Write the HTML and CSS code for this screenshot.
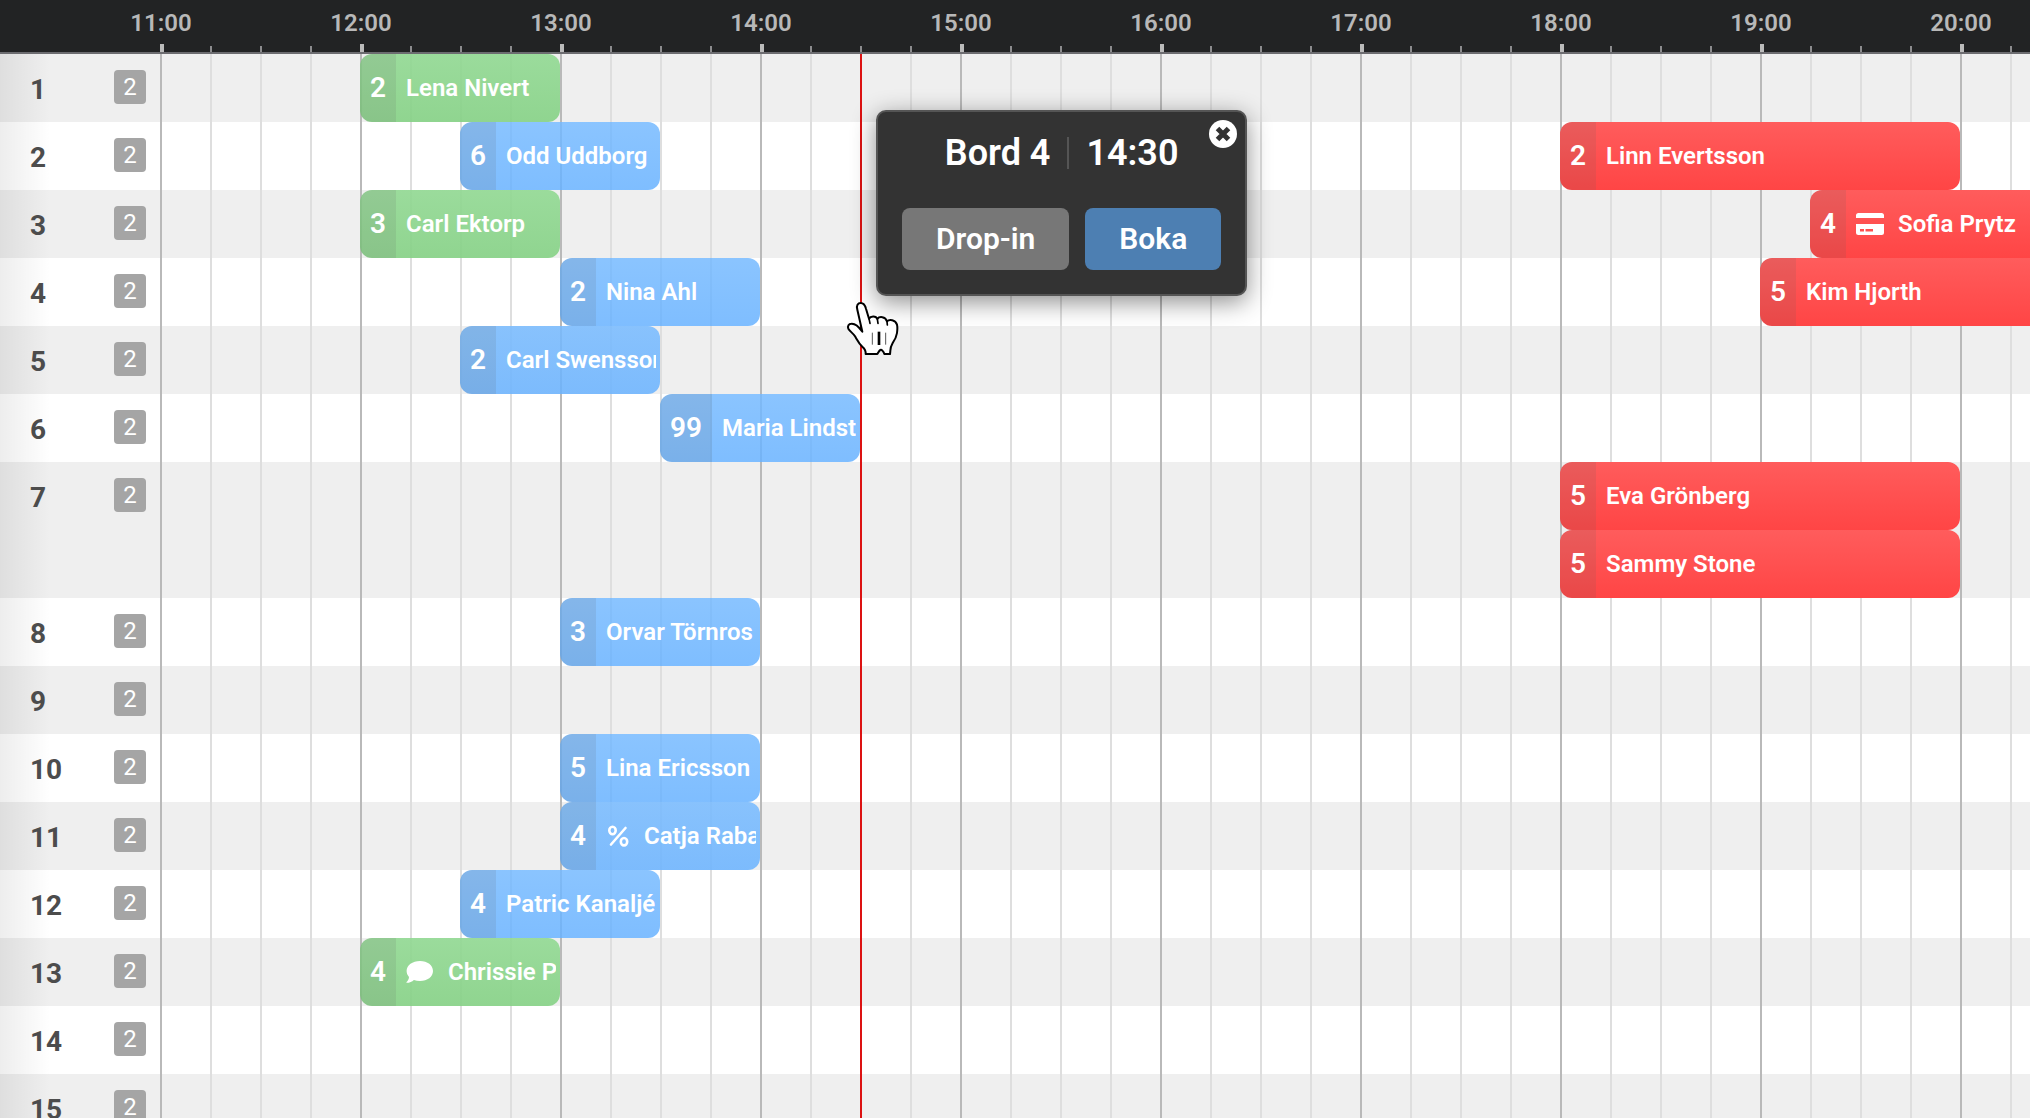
FILE: index.html
```
<!DOCTYPE html>
<html lang="sv">
<head>
    <meta charset="UTF-8">
    <meta name="viewport" content="width=device-width, initial-scale=1.0">
    <title>Bokningar</title>
    <link rel="stylesheet" href="styles.css">
</head>
<body>
    <!-- Time axis -->
    <header class="timebar">
        <div class="axis">
            <ul class="times">
                <li>11:00</li>
                <li>12:00</li>
                <li>13:00</li>
                <li>14:00</li>
                <li>15:00</li>
                <li>16:00</li>
                <li>17:00</li>
                <li>18:00</li>
                <li>19:00</li>
                <li>20:00</li>
            </ul>
        </div>
    </header>

    <!-- Tables and bookings -->
    <main class="board">
        <div class="row">
            <div class="label"><span class="number">1</span><span class="seats">2</span></div>
            <div class="track">
                <div class="booking seated from-1200 hour-1"><span class="guests">2</span><span class="name">Lena Nivert</span></div>
            </div>
        </div>
        <div class="row">
            <div class="label"><span class="number">2</span><span class="seats">2</span></div>
            <div class="track">
                <div class="booking done from-1230 hour-1"><span class="guests">6</span><span class="name">Odd Uddborg</span></div>
                <div class="booking upcoming from-1800 hour-2"><span class="guests">2</span><span class="name">Linn Evertsson</span></div>
            </div>
        </div>
        <div class="row">
            <div class="label"><span class="number">3</span><span class="seats">2</span></div>
            <div class="track">
                <div class="booking seated from-1200 hour-1"><span class="guests">3</span><span class="name">Carl Ektorp</span></div>
                <div class="booking upcoming from-1915 hour-2">
                    <span class="guests">4</span>
                    <svg class="icon card" viewBox="0 0 28 22" width="28" height="22">
                        <path fill="#fff" fill-rule="evenodd" d="M2.500 0H25.500Q28 0 28 2.500V5H0V2.500Q0 0 2.500 0ZM0 11H28V19.500Q28 22 25.500 22H2.500Q0 22 0 19.500ZM4 16V18.500H8V16ZM9.500 16V18.500H17V16Z"/>
                    </svg>
                    <span class="name">Sofia Prytz</span>
                </div>
            </div>
        </div>
        <div class="row">
            <div class="label"><span class="number">4</span><span class="seats">2</span></div>
            <div class="track">
                <div class="booking done from-1300 hour-1"><span class="guests">2</span><span class="name">Nina Ahl</span></div>
                <div class="booking upcoming from-1900 hour-2"><span class="guests">5</span><span class="name">Kim Hjorth</span></div>
            </div>
        </div>
        <div class="row">
            <div class="label"><span class="number">5</span><span class="seats">2</span></div>
            <div class="track">
                <div class="booking done from-1230 hour-1"><span class="guests">2</span><span class="name">Carl Swensson</span></div>
            </div>
        </div>
        <div class="row">
            <div class="label"><span class="number">6</span><span class="seats">2</span></div>
            <div class="track">
                <div class="booking done from-1330 hour-1"><span class="guests">99</span><span class="name">Maria Lindström</span></div>
            </div>
        </div>
        <div class="row">
            <div class="label"><span class="number">7</span><span class="seats">2</span></div>
            <div class="track">
                <div class="booking upcoming from-1800 hour-2"><span class="guests">5</span><span class="name">Eva Grönberg</span></div>
                <div class="booking upcoming from-1800 hour-2 second"><span class="guests">5</span><span class="name">Sammy Stone</span></div>
            </div>
        </div>
        <div class="row">
            <div class="label"><span class="number">8</span><span class="seats">2</span></div>
            <div class="track">
                <div class="booking done from-1300 hour-1"><span class="guests">3</span><span class="name">Orvar Törnros</span></div>
            </div>
        </div>
        <div class="row">
            <div class="label"><span class="number">9</span><span class="seats">2</span></div>
            <div class="track"></div>
        </div>
        <div class="row">
            <div class="label"><span class="number">10</span><span class="seats">2</span></div>
            <div class="track">
                <div class="booking done from-1300 hour-1"><span class="guests">5</span><span class="name">Lina Ericsson</span></div>
            </div>
        </div>
        <div class="row">
            <div class="label"><span class="number">11</span><span class="seats">2</span></div>
            <div class="track">
                <div class="booking done from-1300 hour-1">
                    <span class="guests">4</span>
                    <svg class="icon percent" viewBox="0 0 24 22" width="24" height="22">
                        <g fill="none" stroke="#fff" stroke-width="2.600" stroke-linecap="round">
                            <ellipse cx="6.500" cy="5.500" rx="3.200" ry="3.700"/>
                            <ellipse cx="18" cy="16.700" rx="3.200" ry="3.700"/>
                            <path d="M19.500 3L5 19.500"/>
                        </g>
                    </svg>
                    <span class="name">Catja Rabalder</span>
                </div>
            </div>
        </div>
        <div class="row">
            <div class="label"><span class="number">12</span><span class="seats">2</span></div>
            <div class="track">
                <div class="booking done from-1230 hour-1"><span class="guests">4</span><span class="name">Patric Kanaljé</span></div>
            </div>
        </div>
        <div class="row">
            <div class="label"><span class="number">13</span><span class="seats">2</span></div>
            <div class="track">
                <div class="booking seated from-1200 hour-1">
                    <span class="guests">4</span>
                    <svg class="icon comment" viewBox="0 0 28 22" width="28" height="22">
                        <path fill="#fff" d="M14 0C21.500 0 27 4.300 27 10S21.500 20 14 20C11.800 20 9.700 19.600 7.900 18.900C6 20.600 3.500 21.800 0.800 21.800C0.300 21.800 0.300 21.300 0.600 21C2 19.600 2.900 18 3 15.900C1.500 14.300 0.600 12.200 0.600 10C0.600 4.300 6.500 0 14 0Z"/>
                    </svg>
                    <span class="name">Chrissie Palm</span>
                </div>
            </div>
        </div>
        <div class="row">
            <div class="label"><span class="number">14</span><span class="seats">2</span></div>
            <div class="track"></div>
        </div>
        <div class="row">
            <div class="label"><span class="number">15</span><span class="seats">2</span></div>
            <div class="track"></div>
        </div>

        <!-- Selected time -->
        <div class="now"></div>

        <!-- Popup for a free slot -->
        <div class="popup">
            <button type="button" class="close" aria-label="Stäng">
                <svg viewBox="0 0 28 28" width="28" height="28">
                    <circle cx="14" cy="14" r="14" fill="#fff"/>
                    <path d="M8.500 8.500L19.500 19.500M19.500 8.500L8.500 19.500" stroke="#333" stroke-width="5"/>
                </svg>
            </button>
            <h2><span>Bord 4</span><span class="time">14:30</span></h2>
            <div class="actions">
                <button type="button" class="dropin">Drop-in</button>
                <button type="button" class="book">Boka</button>
            </div>
        </div>

        <svg class="pointer" viewBox="48 32 162 168" width="54" height="56">
            <path fill="#fff" stroke="#000" stroke-width="6" stroke-linejoin="round" d="M97 124L82 58C78 45 84 38 92 38C101 38 105 44 108 55L117 85C122 76 138 76 142 86C148 77 166 78 171 93C178 86 196 88 201 103C203 110 202 120 201 128C199 142 194 150 187 160C180 171 182 178 180 191H163C161 184 155 177 151 179C147 181 145 187 142 191H107C108 181 105 176 97 169C86 159 82 150 75 138C69 128 60 124 55 115C52 107 56 100 64 100C76 99 84 108 97 124Z"/>
            <path fill="none" stroke="#000" stroke-width="5" stroke-linecap="round" d="M117 85L120 99M142 86L144 99M171 93L172 104"/>
            <path fill="none" stroke="#000" stroke-width="8" d="M147 124V164"/>
            <path fill="none" stroke="#000" stroke-width="2" d="M127 127V163M167 127V163"/>
        </svg>
    </main>
</body>
</html>
```
FILE: styles.css
```
/* General body styling */
* {
    box-sizing: border-box;
}

body {
    font-family: Roboto, sans-serif;
    display: flex;
    flex-direction: column;
    height: 100vh;
    margin: 0;
    overflow: hidden;
    background-color: #fff;
}

/* Time axis */
.timebar {
    flex: none;
    background-color: #222324;
    border-bottom: 2px solid #6c6c70;
}

/* Ticks for hours and quarters */
.axis {
    margin-left: 160px;
    height: 52px;
    background-image:
        linear-gradient(to right, #bbb 4px, transparent 4px),
        linear-gradient(to right, #8c8c8e 2px, transparent 2px);
    background-size: 200px 8px, 50px 6px;
    background-position: left bottom;
    background-repeat: repeat-x;
}

.times {
    display: flex;
    list-style-type: none;
    margin: 0 0 0 -99px;
    padding: 0;
}

.times li {
    flex: none;
    width: 200px;
    line-height: 46px;
    text-align: center;
    font-size: 24px;
    font-weight: 600;
    color: #b8b8b8;
}

/* Rows */
.board {
    position: relative;
    flex: 1;
    min-height: 0;
}

.row {
    display: flex;
    background-color: #fff;
}

.row:nth-child(odd) {
    background-color: #efefef;
}

.label {
    flex: none;
    display: flex;
    align-items: flex-start;
    justify-content: space-between;
    width: 160px;
    padding: 16px 14px 0 30px;
    background-image: linear-gradient(to right, rgba(0, 0, 0, 0.07), transparent 50px);
}

.number {
    font-size: 28px;
    line-height: 40px;
    font-weight: 700;
    color: #4c4c4c;
}

.seats {
    width: 32px;
    border-radius: 4px;
    background-color: #a5a5a5;
    color: #fff;
    font-size: 24px;
    line-height: 34px;
    text-align: center;
}

/* One column is a quarter of an hour */
.track {
    flex: 1;
    min-width: 0;
    display: grid;
    grid-auto-columns: 50px;
    grid-auto-rows: 68px;
    min-height: 68px;
    overflow: hidden;
    background-image:
        linear-gradient(to right, #b9b9b9 2px, transparent 2px),
        linear-gradient(to right, #dedede 2px, transparent 2px);
    background-size: 200px 100%, 50px 100%;
}

/* Bookings */
.booking {
    grid-row: 1;
    display: flex;
    align-items: center;
    padding-right: 4px;
    border-radius: 12px;
    overflow: hidden;
    color: #fff;
}

.second {
    grid-row: 2;
}

.seated {
    background-image: linear-gradient(rgba(140, 216, 141, 0.85), rgba(127, 208, 127, 0.85));
}

.done {
    background-image: linear-gradient(rgba(118, 186, 255, 0.85), rgba(104, 178, 255, 0.85));
}

.upcoming {
    background-image: linear-gradient(#ff5c5c, #ff4545);
}

.from-1200 { grid-column-start: 5; }
.from-1230 { grid-column-start: 7; }
.from-1300 { grid-column-start: 9; }
.from-1330 { grid-column-start: 11; }
.from-1800 { grid-column-start: 29; }
.from-1900 { grid-column-start: 33; }
.from-1915 { grid-column-start: 34; }

.hour-1 { grid-column-end: span 4; }
.hour-2 { grid-column-end: span 8; }

.guests {
    flex: none;
    padding: 0 10px;
    background-color: rgba(90, 90, 90, 0.13);
    font-size: 28px;
    line-height: 68px;
    font-weight: 600;
}

.name {
    flex: 1;
    min-width: 0;
    margin-left: 10px;
    overflow: hidden;
    white-space: nowrap;
    font-size: 24px;
    line-height: 68px;
    font-weight: 600;
}

.icon {
    flex: none;
    margin: 0 4px 0 10px;
}

/* Vertical line for the selected time */
.now {
    position: absolute;
    top: 0;
    bottom: 0;
    left: 860px;
    width: 2px;
    background-color: #dc1212;
}

/* Popup */
.popup {
    position: absolute;
    top: 56px;
    left: 876px;
    padding: 20px 24px 24px;
    border: 2px solid #555;
    border-radius: 10px;
    background-color: #333;
    box-shadow: 0 6px 24px rgba(0, 0, 0, 0.45);
    color: #fff;
}

.popup h2 {
    display: flex;
    align-items: center;
    justify-content: center;
    margin: 0 0 34px;
    font-size: 36px;
    line-height: 42px;
    font-weight: 600;
}

.time {
    margin-left: 17px;
    padding-left: 17px;
    border-left: 2px solid #555;
    line-height: 32px;
}

.actions {
    display: flex;
    gap: 16px;
}

.actions button {
    padding: 0 34px;
    border: none;
    border-radius: 8px;
    color: #fff;
    font-family: inherit;
    font-size: 30px;
    line-height: 62px;
    font-weight: 600;
    cursor: pointer;
}

.dropin {
    background-color: #777;
}

.book {
    background-color: #4d7fb2;
}

.close {
    position: absolute;
    top: 8px;
    right: 8px;
    padding: 0;
    border: none;
    background: none;
    cursor: pointer;
}

.close svg {
    display: block;
}

/* Hand over the selected time */
.pointer {
    position: absolute;
    top: 247px;
    left: 846px;
}
```
